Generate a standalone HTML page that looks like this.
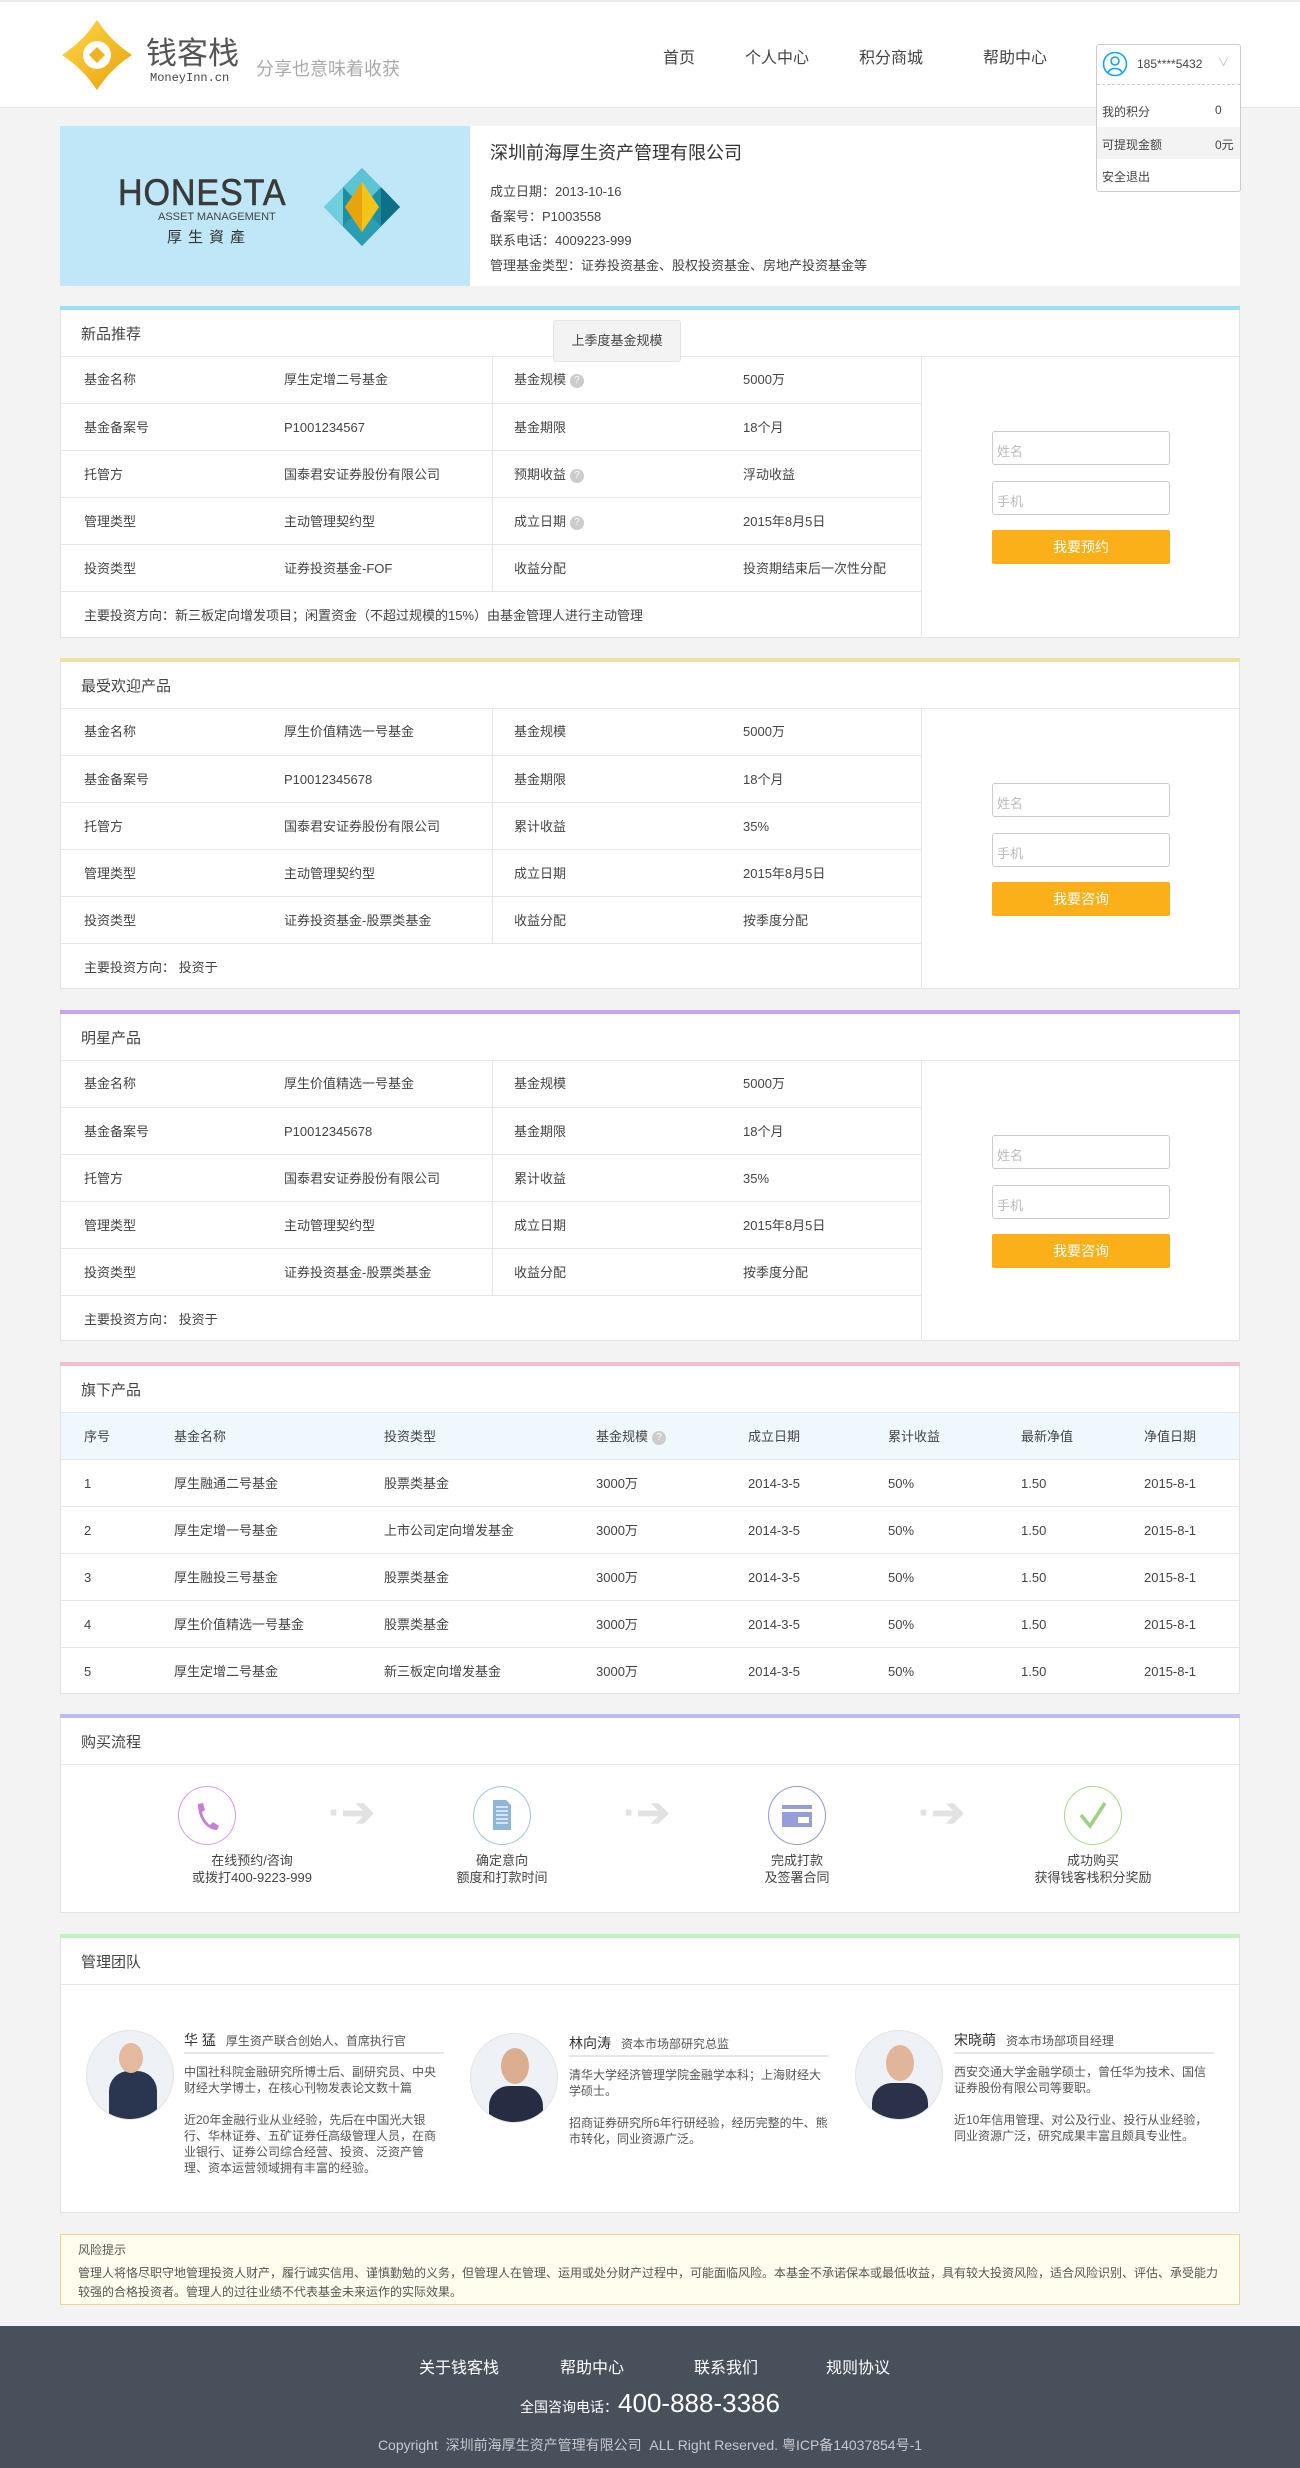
<!DOCTYPE html>
<html><head><meta charset="utf-8">
<style>
*{margin:0;padding:0;box-sizing:border-box}
body{width:1300px;height:2468px;background:#f3f3f3;font-family:"Liberation Sans","Noto Sans CJK SC",sans-serif;color:#444;font-size:13px;position:relative;overflow:hidden}
.a{position:absolute}
.hdr{left:0;top:0;width:1300px;height:108px;background:#fff;border-top:2px solid #ececec;border-bottom:1px solid #e6e6e6}
.nav{top:44px;font-size:16px;color:#444}
.sec{left:60px;width:1180px;background:#fff;border:1px solid #e3e3e3;border-top:none}
.bar{position:absolute;left:-1px;top:0;width:1180px;height:4px}
.st{position:absolute;left:20px;font-size:15px;color:#444}
.row{position:absolute;left:0;width:860px;height:47px;border-top:1px solid #e6e6e6}
.row span{position:absolute;top:15px;white-space:nowrap;line-height:17px;height:17px}
.q{display:inline-block;width:14px;height:14px;border-radius:50%;background:#ccc;color:#fff;font-size:10px;text-align:center;line-height:14px;vertical-align:1px;margin-left:4px;font-style:normal}
.inp{position:absolute;left:931px;width:178px;height:34px;border:1px solid #ccc;border-radius:3px;color:#bbb;padding:9px 4px;font-size:13px}
.btn{position:absolute;left:931px;width:178px;height:34px;background:#fbb01a;border-radius:2px;color:#fff;text-align:center;line-height:34px;font-size:14px}
.tr{position:absolute;left:0;width:1178px;height:47px;border-top:1px solid #e6e6e6}
.tr span{position:absolute;top:15px;white-space:nowrap;line-height:17px;height:17px}
.circ{position:absolute;width:58px;height:59px;border-radius:50%;border:1.5px solid}
.ctext{position:absolute;width:200px;text-align:center;font-size:13px;line-height:17px;color:#444}
.arrow{position:absolute;font-size:40px;color:#e2e2e2;font-weight:bold}
.ph{position:absolute;width:88px;height:90px;border-radius:50%;background:#eef1f5;overflow:hidden;border:1px solid #e4e4e4}
.tm{position:absolute;width:260px;font-size:12px;line-height:16px;color:#555}
.tm b{font-size:14px;font-weight:normal;color:#333;margin-right:10px}
.tm .nm{height:22px;border-bottom:2px solid #e6e6e6;margin-bottom:10px;white-space:nowrap}
.tm p{margin-bottom:16px}
</style></head><body>
<div class="a hdr"></div>
<svg class="a" style="left:60px;top:18px" width="74" height="74" viewBox="0 0 74 74">
<defs><linearGradient id="g" x1="0" y1="0" x2="1" y2="1"><stop offset="0" stop-color="#ffd84a"/><stop offset="1" stop-color="#e8a10b"/></linearGradient></defs>
<path d="M37 2 C48 18 56 26 72 37 C56 48 48 56 37 72 C26 56 18 48 2 37 C18 26 26 18 37 2Z" fill="url(#g)"/>
<circle cx="37" cy="37" r="14" fill="#fff"/><path d="M37 29 L45 37 L37 45 L29 37Z" fill="#f0b21d"/>
</svg>
<div class="a" style="left:146px;top:28px;font-size:31px;color:#555">钱客栈</div>
<div class="a" style="left:150px;top:71px;font-size:12px;font-family:'Liberation Mono',monospace;color:#444">MoneyInn.cn</div>
<div class="a" style="left:256px;top:55px;font-size:18px;color:#aaa">分享也意味着收获</div>
<div class="a nav" style="left:663px">首页</div>
<div class="a nav" style="left:745px">个人中心</div>
<div class="a nav" style="left:859px">积分商城</div>
<div class="a nav" style="left:983px">帮助中心</div>

<div class="a" style="left:60px;top:126px;width:1180px;height:160px;background:#fff"></div>
<div class="a" style="left:60px;top:126px;width:410px;height:160px;background:#bfe7f7"></div>
<div class="a" style="left:118px;top:172px;font-size:37px;color:#3a3a3a;letter-spacing:1px;transform:scaleX(.92);transform-origin:left;-webkit-text-stroke:0.6px #3a3a3a">HONESTA</div>
<div class="a" style="left:158px;top:211px;font-size:11px;color:#444">ASSET MANAGEMENT</div>
<div class="a" style="left:167px;top:226px;font-size:15px;color:#333;letter-spacing:6px">厚生資產</div>
<svg class="a" style="left:324px;top:168px" width="77" height="78" viewBox="0 0 77 78">
<path d="M38 0 L76 39 L38 78 L0 39Z" fill="#1d8fa4"/><path d="M38 0 L57 19 L38 39 L19 19Z" fill="#5cc4d3"/><path d="M38 39 L57 58 L38 78 L19 58Z" fill="#2a9fb3"/><path d="M38 14 L55 39 L38 64 L21 39Z" fill="#f5c418"/><path d="M38 14 L38 64 L21 39Z" fill="#e9a40b"/><path d="M0 39 L19 19 L19 58Z" fill="#6fcfdc"/><path d="M76 39 L57 19 L57 58Z" fill="#0f6f85"/>
</svg>
<div class="a" style="left:490px;top:139px;font-size:18px;color:#333">深圳前海厚生资产管理有限公司</div>
<div class="a" style="left:490px;top:180px;font-size:13px;line-height:24.5px;color:#444">成立日期：2013-10-16<br>备案号：P1003558<br>联系电话：4009223-999<br>管理基金类型：证券投资基金、股权投资基金、房地产投资基金等</div>

<div class="a" style="left:1096px;top:44px;width:145px;height:148px;background:#fff;border:1px solid #ccc;border-radius:3px"></div>
<svg class="a" style="left:1102px;top:51px" width="26" height="26" viewBox="0 0 26 26"><circle cx="13" cy="13" r="11.5" fill="none" stroke="#16a5e8" stroke-width="1.6"/><circle cx="13" cy="10" r="4" fill="none" stroke="#16a5e8" stroke-width="1.6"/><path d="M6 22 C7 16 19 16 20 22" fill="none" stroke="#16a5e8" stroke-width="1.6"/></svg>
<div class="a" style="left:1137px;top:57px;font-size:12px;color:#444">185****5432</div>
<div class="a" style="left:1218px;top:54px;font-size:11px;color:#bbb">∨</div>
<div class="a" style="left:1097px;top:84px;width:143px;border-top:1px dashed #ccc"></div>
<div class="a" style="left:1097px;top:127px;width:143px;height:32px;background:#f3f3f3"></div>
<div class="a" style="left:1102px;top:103px;font-size:12px">我的积分</div><div class="a" style="left:1215px;top:103px;font-size:12px">0</div>
<div class="a" style="left:1102px;top:136px;font-size:12px">可提现金额</div><div class="a" style="left:1215px;top:136px;font-size:12px">0元</div>
<div class="a" style="left:1102px;top:168px;font-size:12px">安全退出</div>

<!-- section 1 -->
<div class="a sec" style="top:306px;height:332px">
<div class="bar" style="background:#9ddff0"></div>
<div class="st" style="top:17px">新品推荐</div>
<div class="a" style="left:860px;top:50px;height:282px;border-left:1px solid #e6e6e6"></div>
<div class="a" style="left:0;top:50px;width:1178px;border-top:1px solid #e6e6e6"></div>
<div class="row" style="top:50px;border-top:none"><span style="left:23px">基金名称</span><span style="left:223px">厚生定增二号基金</span><span style="left:453px">基金规模<i class="q">?</i></span><span style="left:682px">5000万</span></div>
<div class="row" style="top:97px"><span style="left:23px">基金备案号</span><span style="left:223px">P1001234567</span><span style="left:453px">基金期限</span><span style="left:682px">18个月</span></div>
<div class="row" style="top:144px"><span style="left:23px">托管方</span><span style="left:223px">国泰君安证券股份有限公司</span><span style="left:453px">预期收益<i class="q">?</i></span><span style="left:682px">浮动收益</span></div>
<div class="row" style="top:191px"><span style="left:23px">管理类型</span><span style="left:223px">主动管理契约型</span><span style="left:453px">成立日期<i class="q">?</i></span><span style="left:682px">2015年8月5日</span></div>
<div class="row" style="top:238px"><span style="left:23px">投资类型</span><span style="left:223px">证券投资基金-FOF</span><span style="left:453px">收益分配</span><span style="left:682px">投资期结束后一次性分配</span></div>
<div class="row" style="top:285px"><span style="left:23px">主要投资方向：新三板定向增发项目；闲置资金（不超过规模的15%）由基金管理人进行主动管理</span></div>
<div class="a" style="left:431px;top:50px;height:235px;border-left:1px solid #e6e6e6"></div>
<div class="inp" style="top:125px">姓名</div><div class="inp" style="top:175px">手机</div><div class="btn" style="top:224px">我要预约</div>
<div class="a" style="left:492px;top:14px;width:128px;height:42px;background:#f3f3f3;border:1px solid #e4e4e4;border-radius:3px;font-size:13px;text-align:center;line-height:40px;color:#444">上季度基金规模</div>
</div>

<!-- section 2 & 3 -->
<div class="a sec" style="top:658px;height:331px">
<div class="bar" style="background:#efe0a8"></div>
<div class="st" style="top:17px">最受欢迎产品</div>
<div class="a" style="left:860px;top:50px;height:281px;border-left:1px solid #e6e6e6"></div>
<div class="a" style="left:431px;top:50px;height:235px;border-left:1px solid #e6e6e6"></div>
<div class="a" style="left:0;top:50px;width:1178px;border-top:1px solid #e6e6e6"></div>
<div class="row" style="top:50px;border-top:none"><span style="left:23px">基金名称</span><span style="left:223px">厚生价值精选一号基金</span><span style="left:453px">基金规模</span><span style="left:682px">5000万</span></div>
<div class="row" style="top:97px"><span style="left:23px">基金备案号</span><span style="left:223px">P10012345678</span><span style="left:453px">基金期限</span><span style="left:682px">18个月</span></div>
<div class="row" style="top:144px"><span style="left:23px">托管方</span><span style="left:223px">国泰君安证券股份有限公司</span><span style="left:453px">累计收益</span><span style="left:682px">35%</span></div>
<div class="row" style="top:191px"><span style="left:23px">管理类型</span><span style="left:223px">主动管理契约型</span><span style="left:453px">成立日期</span><span style="left:682px">2015年8月5日</span></div>
<div class="row" style="top:238px"><span style="left:23px">投资类型</span><span style="left:223px">证券投资基金-股票类基金</span><span style="left:453px">收益分配</span><span style="left:682px">按季度分配</span></div>
<div class="row" style="top:285px"><span style="left:23px">主要投资方向： 投资于</span></div>
<div class="inp" style="top:125px">姓名</div><div class="inp" style="top:175px">手机</div><div class="btn" style="top:224px">我要咨询</div>
</div>
<div class="a sec" style="top:1010px;height:331px">
<div class="bar" style="background:#c9a6ec"></div>
<div class="st" style="top:17px">明星产品</div>
<div class="a" style="left:860px;top:50px;height:281px;border-left:1px solid #e6e6e6"></div>
<div class="a" style="left:431px;top:50px;height:235px;border-left:1px solid #e6e6e6"></div>
<div class="a" style="left:0;top:50px;width:1178px;border-top:1px solid #e6e6e6"></div>
<div class="row" style="top:50px;border-top:none"><span style="left:23px">基金名称</span><span style="left:223px">厚生价值精选一号基金</span><span style="left:453px">基金规模</span><span style="left:682px">5000万</span></div>
<div class="row" style="top:97px"><span style="left:23px">基金备案号</span><span style="left:223px">P10012345678</span><span style="left:453px">基金期限</span><span style="left:682px">18个月</span></div>
<div class="row" style="top:144px"><span style="left:23px">托管方</span><span style="left:223px">国泰君安证券股份有限公司</span><span style="left:453px">累计收益</span><span style="left:682px">35%</span></div>
<div class="row" style="top:191px"><span style="left:23px">管理类型</span><span style="left:223px">主动管理契约型</span><span style="left:453px">成立日期</span><span style="left:682px">2015年8月5日</span></div>
<div class="row" style="top:238px"><span style="left:23px">投资类型</span><span style="left:223px">证券投资基金-股票类基金</span><span style="left:453px">收益分配</span><span style="left:682px">按季度分配</span></div>
<div class="row" style="top:285px"><span style="left:23px">主要投资方向： 投资于</span></div>
<div class="inp" style="top:125px">姓名</div><div class="inp" style="top:175px">手机</div><div class="btn" style="top:224px">我要咨询</div>
</div>

<!-- 旗下产品 -->
<div class="a sec" style="top:1362px;height:332px">
<div class="bar" style="background:#f1bfd2"></div>
<div class="st" style="top:17px">旗下产品</div>
<div class="tr" style="top:50px;background:#eef8fd"><span style="left:23px">序号</span><span style="left:113px">基金名称</span><span style="left:323px">投资类型</span><span style="left:535px">基金规模<i class="q">?</i></span><span style="left:687px">成立日期</span><span style="left:827px">累计收益</span><span style="left:960px">最新净值</span><span style="left:1083px">净值日期</span></div>
<div class="tr" style="top:97px"><span style="left:23px">1</span><span style="left:113px">厚生融通二号基金</span><span style="left:323px">股票类基金</span><span style="left:535px">3000万</span><span style="left:687px">2014-3-5</span><span style="left:827px">50%</span><span style="left:960px">1.50</span><span style="left:1083px">2015-8-1</span></div>
<div class="tr" style="top:144px"><span style="left:23px">2</span><span style="left:113px">厚生定增一号基金</span><span style="left:323px">上市公司定向增发基金</span><span style="left:535px">3000万</span><span style="left:687px">2014-3-5</span><span style="left:827px">50%</span><span style="left:960px">1.50</span><span style="left:1083px">2015-8-1</span></div>
<div class="tr" style="top:191px"><span style="left:23px">3</span><span style="left:113px">厚生融投三号基金</span><span style="left:323px">股票类基金</span><span style="left:535px">3000万</span><span style="left:687px">2014-3-5</span><span style="left:827px">50%</span><span style="left:960px">1.50</span><span style="left:1083px">2015-8-1</span></div>
<div class="tr" style="top:238px"><span style="left:23px">4</span><span style="left:113px">厚生价值精选一号基金</span><span style="left:323px">股票类基金</span><span style="left:535px">3000万</span><span style="left:687px">2014-3-5</span><span style="left:827px">50%</span><span style="left:960px">1.50</span><span style="left:1083px">2015-8-1</span></div>
<div class="tr" style="top:285px"><span style="left:23px">5</span><span style="left:113px">厚生定增二号基金</span><span style="left:323px">新三板定向增发基金</span><span style="left:535px">3000万</span><span style="left:687px">2014-3-5</span><span style="left:827px">50%</span><span style="left:960px">1.50</span><span style="left:1083px">2015-8-1</span></div>
</div>

<!-- 购买流程 -->
<div class="a sec" style="top:1714px;height:199px">
<div class="bar" style="background:#bcbcf0"></div>
<div class="st" style="top:17px">购买流程</div>
<div class="a" style="left:0;top:50px;width:1178px;border-top:1px solid #e6e6e6"></div>
</div>
<div class="circ" style="left:178px;top:1786px;border-color:#d99be0"></div>
<svg class="a" style="left:193px;top:1801px" width="28" height="30" viewBox="0 0 28 30"><path d="M5 3 L10 2 L12 9 L9 11 C10 16 13 21 17 24 L20 21 L26 25 L24 29 C14 29 5 18 5 3Z" fill="#c77fd4"/></svg>
<div class="circ" style="left:473px;top:1786px;border-color:#9cc5de"></div>
<svg class="a" style="left:493px;top:1800px" width="18" height="30"><path d="M0 0H13L18 5V30H0Z" fill="#8fb6d6"/><path d="M3 7H15M3 11H15M3 15H15M3 19H15M3 23H15" stroke="#fff" stroke-width="1.2"/></svg>
<div class="circ" style="left:768px;top:1786px;border-color:#8f99dc"></div>
<svg class="a" style="left:782px;top:1805px" width="30" height="22"><rect width="30" height="22" fill="#959ed9"/><rect y="4" width="30" height="3" fill="#fff"/><rect x="16" y="12" width="11" height="6" fill="#fff"/></svg>
<div class="circ" style="left:1064px;top:1786px;border-color:#a7d98c"></div>
<svg class="a" style="left:1078px;top:1800px" width="30" height="30" viewBox="0 0 30 30"><path d="M3 15 L12 26 L27 3" fill="none" stroke="#9dd07f" stroke-width="3.5"/></svg>
<div class="arrow" style="left:328px;top:1790px">·➔</div>
<div class="arrow" style="left:623px;top:1790px">·➔</div>
<div class="arrow" style="left:918px;top:1790px">·➔</div>
<div class="ctext" style="left:152px;top:1852px">在线预约/咨询<br>或拨打400-9223-999</div>
<div class="ctext" style="left:402px;top:1852px">确定意向<br>额度和打款时间</div>
<div class="ctext" style="left:697px;top:1852px">完成打款<br>及签署合同</div>
<div class="ctext" style="left:993px;top:1852px">成功购买<br>获得钱客栈积分奖励</div>

<!-- 管理团队 -->
<div class="a sec" style="top:1934px;height:279px">
<div class="bar" style="background:#c3f0c0"></div>
<div class="st" style="top:17px">管理团队</div>
<div class="a" style="left:0;top:50px;width:1178px;border-top:1px solid #e6e6e6"></div>
</div>
<div class="ph" style="left:86px;top:2030px"><div class="a" style="left:22px;top:40px;width:48px;height:60px;background:#2a3550;border-radius:20px 20px 0 0"></div><div class="a" style="left:32px;top:12px;width:24px;height:30px;background:#e3b9a0;border-radius:50%"></div></div>
<div class="ph" style="left:470px;top:2033px"><div class="a" style="left:18px;top:52px;width:54px;height:50px;background:#262d42;border-radius:20px 20px 0 0"></div><div class="a" style="left:30px;top:14px;width:28px;height:36px;background:#dcae90;border-radius:50%"></div></div>
<div class="ph" style="left:855px;top:2030px"><div class="a" style="left:16px;top:52px;width:56px;height:50px;background:#2a3148;border-radius:20px 20px 0 0"></div><div class="a" style="left:30px;top:14px;width:28px;height:36px;background:#e1b59a;border-radius:50%"></div></div>
<div class="tm" style="left:184px;top:2032px"><div class="nm"><b>华 猛</b>厚生资产联合创始人、首席执行官</div><p>中国社科院金融研究所博士后、副研究员、中央财经大学博士，在核心刊物发表论文数十篇</p><p>近20年金融行业从业经验，先后在中国光大银行、华林证券、五矿证券任高级管理人员，在商业银行、证券公司综合经营、投资、泛资产管理、资本运营领域拥有丰富的经验。</p></div>
<div class="tm" style="left:569px;top:2035px"><div class="nm"><b>林向涛</b>资本市场部研究总监</div><p>清华大学经济管理学院金融学本科；上海财经大学硕士。</p><p>招商证券研究所6年行研经验，经历完整的牛、熊市转化，同业资源广泛。</p></div>
<div class="tm" style="left:954px;top:2032px"><div class="nm"><b>宋晓萌</b>资本市场部项目经理</div><p>西安交通大学金融学硕士，曾任华为技术、国信证券股份有限公司等要职。</p><p>近10年信用管理、对公及行业、投行从业经验，同业资源广泛，研究成果丰富且颇具专业性。</p></div>

<!-- risk -->
<div class="a" style="left:60px;top:2234px;width:1180px;height:71px;background:#fffdee;border:1px solid #f0d590;padding:6px 17px;font-size:12px;line-height:19px;color:#555">风险提示<div style="margin-top:4px">管理人将恪尽职守地管理投资人财产，履行诚实信用、谨慎勤勉的义务，但管理人在管理、运用或处分财产过程中，可能面临风险。本基金不承诺保本或最低收益，具有较大投资风险，适合风险识别、评估、承受能力较强的合格投资者。管理人的过往业绩不代表基金未来运作的实际效果。</div></div>

<div class="a" style="left:0;top:2326px;width:1300px;height:142px;background:#48505c"></div>
<div class="a" style="left:419px;top:2354px;font-size:16px;color:#fff">关于钱客栈</div>
<div class="a" style="left:560px;top:2354px;font-size:16px;color:#fff">帮助中心</div>
<div class="a" style="left:694px;top:2354px;font-size:16px;color:#fff">联系我们</div>
<div class="a" style="left:826px;top:2354px;font-size:16px;color:#fff">规则协议</div>
<div class="a" style="left:0;top:2388px;width:1300px;text-align:center;color:#fff;font-size:14px">全国咨询电话：<span style="font-size:26px">400-888-3386</span></div>
<div class="a" style="left:0;top:2435px;width:1300px;text-align:center;color:#c6c9ce;font-size:14px">Copyright &nbsp;深圳前海厚生资产管理有限公司 &nbsp;ALL Right Reserved. 粤ICP备14037854号-1</div>
</body></html>
